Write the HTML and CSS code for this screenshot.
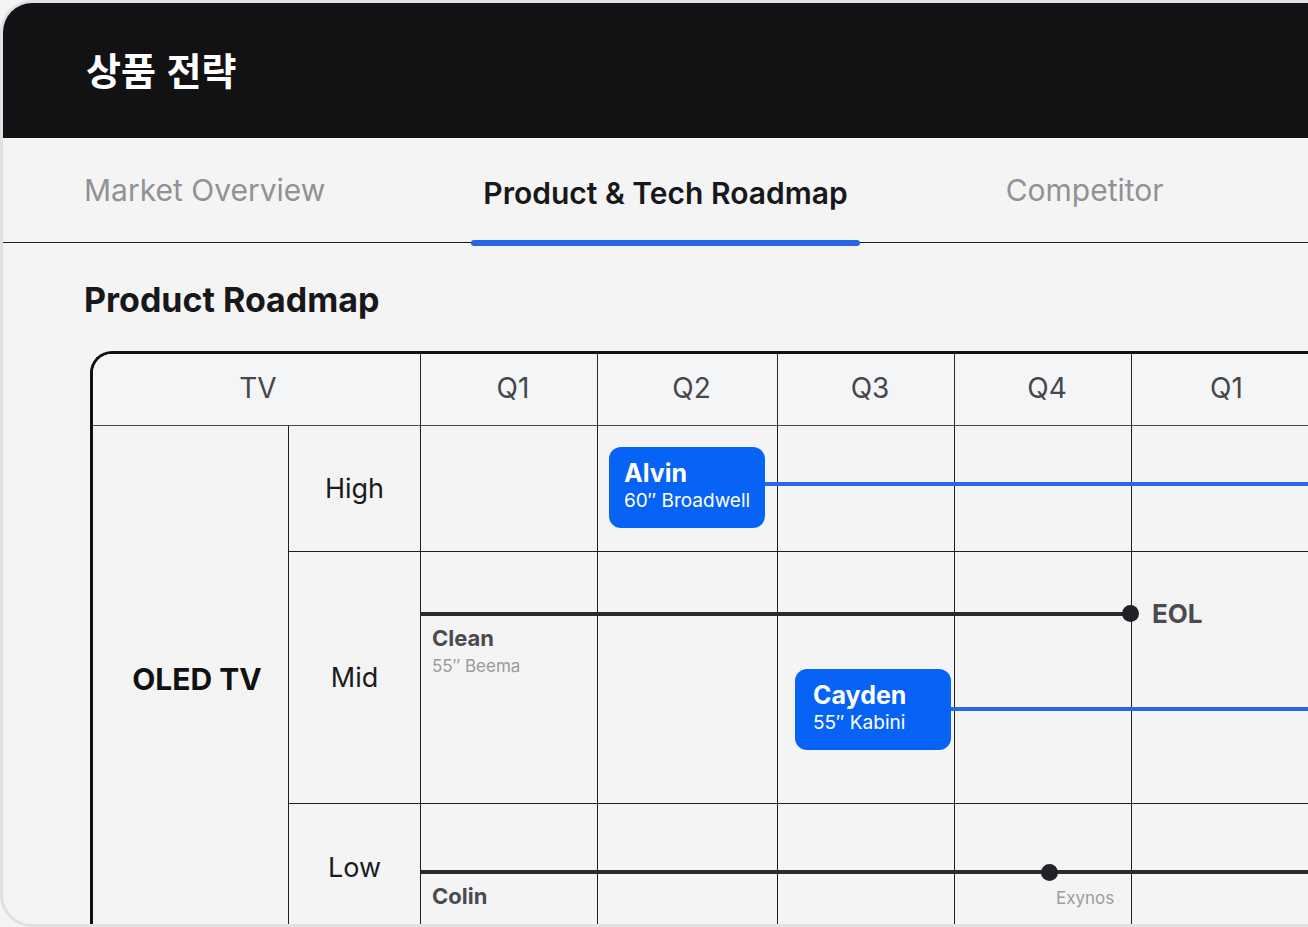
FILE: index.html
```html
<!DOCTYPE html>
<html lang="ko">
<head>
<meta charset="utf-8">
<title>상품 전략</title>
<link rel="stylesheet" href="styles.css">
</head>
<body>
<div class="app">
  <header class="topbar"><h1 class="title">상품 전략</h1></header>
  <nav class="tabs">
    <a class="tab">Market Overview</a>
    <a class="tab is-active">Product &amp; Tech Roadmap</a>
    <a class="tab">Competitor</a>
  </nav>
  <main class="content">
    <h2 class="section-title">Product Roadmap</h2>
    <div class="plan">
      <div class="hd hd-group">TV</div>
      <div class="hd hd-q">Q1</div>
      <div class="hd hd-q">Q2</div>
      <div class="hd hd-q">Q3</div>
      <div class="hd hd-q">Q4</div>
      <div class="hd hd-q hd-open">Q1</div>

      <div class="cat">OLED TV</div>

      <div class="tier">High</div>
      <div class="cell"></div><div class="cell"></div><div class="cell"></div><div class="cell"></div><div class="cell"></div>

      <div class="tier">Mid</div>
      <div class="cell"></div><div class="cell"></div><div class="cell"></div><div class="cell"></div><div class="cell"></div>

      <div class="tier">Low</div>
      <div class="cell"></div><div class="cell"></div><div class="cell"></div><div class="cell"></div><div class="cell"></div>

      <!-- timeline bars -->
      <div class="bar bar-blue bar-alvin"></div>
      <div class="bar bar-blue bar-cayden"></div>
      <div class="bar bar-dark bar-clean"></div>
      <div class="bar bar-dark bar-colin"></div>
      <span class="dot dot-eol"></span>
      <span class="dot dot-colin"></span>

      <!-- products -->
      <div class="product product-alvin">
        <div class="product-name">Alvin</div>
        <div class="product-spec">60″ Broadwell</div>
      </div>
      <div class="product product-cayden">
        <div class="product-name">Cayden</div>
        <div class="product-spec">55″ Kabini</div>
      </div>

      <div class="label label-clean">
        <div class="label-name">Clean</div>
        <div class="label-spec">55″ Beema</div>
      </div>
      <div class="label label-colin">
        <div class="label-name">Colin</div>
      </div>
      <span class="eol">EOL</span>
      <span class="chip-note">Exynos</span>
    </div>
  </main>
</div>
</body>
</html>
```

FILE: styles.css
```css
* { box-sizing: border-box; margin: 0; padding: 0; }

html, body { height: 100%; }

body {
  background: #f4f4f5;
  overflow: hidden;
  font-family: Inter, "Noto Sans CJK KR", sans-serif;
  color: #18181b;
}

/* outer frame */
.app {
  width: 1420px;
  height: 927px;
  border: 3px solid #e1e1e5;
  border-right: 0;
  border-radius: 32px 0 0 32px;
  background: #f4f4f4;
  overflow: hidden;
  display: flex;
  flex-direction: column;
}

.topbar {
  flex: 0 0 135px;
  background: #121214;
  display: flex;
  align-items: center;
  padding: 0 0 4px 83px;
}

.title {
  font-family: "Noto Sans CJK KR", sans-serif;
  font-weight: 700;
  font-size: 38px;
  line-height: 1;
  color: #fff;
}

/* tabs */
.tabs {
  flex: 0 0 105px;
  display: flex;
  align-items: center;
  gap: 135px;
  padding-left: 70px;
  border-bottom: 1px solid #1d1d20;
}

.tab {
  position: relative;
  height: 100%;
  display: flex;
  align-items: center;
  padding: 0 11px;
  font-size: 30px;
  font-weight: 400;
  color: #919196;
  white-space: nowrap;
}

.tab.is-active {
  font-weight: 600;
  color: #18181b;
  padding: 6px 12px 0;
}

.tab.is-active::after {
  content: "";
  position: absolute;
  left: 0;
  right: 0;
  bottom: -4px;
  height: 6px;
  border-radius: 3px;
  background: #2866e8;
}

/* roadmap section */
.content {
  flex: 1 1 auto;
  min-height: 0;
  padding: 37px 0 0 81px;
}

.section-title {
  font-size: 34px;
  font-weight: 700;
  line-height: 40px;
  color: #18181b;
  margin-bottom: 31px;
}

.plan {
  position: relative;
  margin-left: 6px;
  display: grid;
  grid-template-columns: 196px 132px 177px 180px 177px 177px 230px;
  grid-template-rows: 72px 126px 252px 127px;
  width: max-content;
  border-top: 3px solid #111113;
  border-left: 3px solid #111113;
  border-top-left-radius: 22px;
  overflow: hidden;
}

.hd {
  display: flex;
  align-items: center;
  justify-content: center;
  padding-bottom: 3px;
  background: #f4f5f7;
  border-right: 1px solid #2a2a2d;
  border-bottom: 1px solid #4a4a4e;
  font-size: 28px;
  color: #46464b;
}

.hd-group { grid-column: span 2; padding-left: 3px; }
.hd-q { padding-left: 8px; }

.hd-open { justify-content: flex-start; padding-left: 78px; }

.cat {
  grid-row: 2 / span 3;
  display: flex;
  align-items: center;
  justify-content: center;
  padding-left: 13px;
  border-right: 1px solid #1f1f22;
  font-size: 30px;
  font-weight: 700;
  color: #111113;
}

.tier {
  display: flex;
  align-items: center;
  justify-content: center;
  border-right: 1px solid #1f1f22;
  border-bottom: 1px solid #1f1f22;
  font-size: 27px;
  color: #1b1b1e;
}

.cell {
  border-right: 1px solid #1f1f22;
  border-bottom: 1px solid #1f1f22;
}

/* bars and markers over the grid */
.bar {
  position: absolute;
  right: 0;
}

.bar-blue { height: 4px; background: #2a67e6; }
.bar-dark { height: 4px; background: #2a2a2e; }

.bar-alvin  { left: 660px; top: 128px; }
.bar-cayden { left: 850px; top: 353px; }
.bar-clean  { left: 327px; top: 258px; width: 711px; right: auto; }
.bar-colin  { left: 327px; top: 516px; }

.dot {
  position: absolute;
  width: 17px;
  height: 17px;
  border-radius: 50%;
  background: #222226;
}

.dot-eol   { left: 1029px; top: 251px; }
.dot-colin { left: 948px; top: 510px; }

.product {
  position: absolute;
  width: 156px;
  height: 81px;
  padding: 10px 15px;
  border-radius: 12px;
  background: #0763f5;
  color: #fff;
  white-space: nowrap;
}

.product-alvin  { left: 516px; top: 93px; }
.product-cayden { left: 702px; top: 315px; padding-left: 18px; }

.product-name {
  font-size: 25px;
  font-weight: 700;
  line-height: 32px;
}

.product-spec {
  font-size: 19px;
  line-height: 23px;
}

.label {
  position: absolute;
  left: 339px;
  white-space: nowrap;
}

.label-clean { top: 271px; }
.label-colin { top: 529px; }

.label-name {
  font-size: 22px;
  font-weight: 700;
  line-height: 27px;
  color: #4a4a50;
}

.label-spec {
  margin-top: 4px;
  font-size: 17px;
  line-height: 21px;
  color: #9a9aa0;
}

.eol {
  position: absolute;
  left: 1059px;
  top: 244px;
  font-size: 26px;
  font-weight: 700;
  line-height: 32px;
  color: #4a4a50;
}

.chip-note {
  position: absolute;
  left: 963px;
  top: 534px;
  font-size: 17px;
  line-height: 21px;
  color: #9c9ca2;
}
```
